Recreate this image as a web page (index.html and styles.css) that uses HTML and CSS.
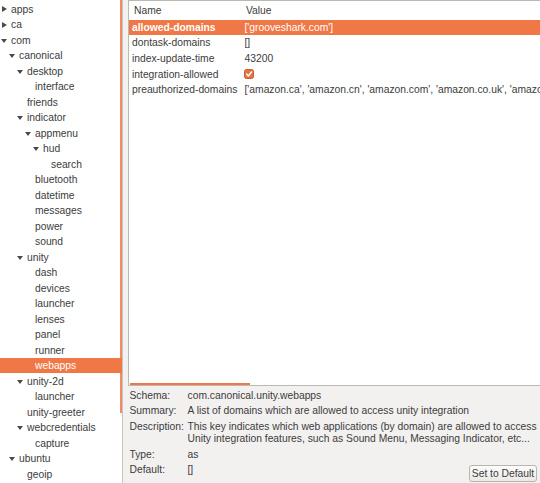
FILE: index.html
```html
<!DOCTYPE html>
<html>
<head>
<meta charset="utf-8">
<link rel="stylesheet" href="styles.css">
</head>
<body>
<div class="window">
  <div class="tree">
    <div class="node lv0"><span class="exp"><svg class="tri-r" width="5" height="6" viewBox="0 0 5 6"><path d="M0 0L5 3L0 6Z"/></svg></span><span>apps</span></div>
    <div class="node lv0"><span class="exp"><svg class="tri-r" width="5" height="6" viewBox="0 0 5 6"><path d="M0 0L5 3L0 6Z"/></svg></span><span>ca</span></div>
    <div class="node lv0"><span class="exp"><svg class="tri-d" width="6" height="4" viewBox="0 0 6 4"><path d="M0 0H6L3 4Z"/></svg></span><span>com</span></div>
    <div class="node lv1"><span class="exp"><svg class="tri-d" width="6" height="4" viewBox="0 0 6 4"><path d="M0 0H6L3 4Z"/></svg></span><span>canonical</span></div>
    <div class="node lv2"><span class="exp"><svg class="tri-d" width="6" height="4" viewBox="0 0 6 4"><path d="M0 0H6L3 4Z"/></svg></span><span>desktop</span></div>
    <div class="node lv3"><span class="exp"></span><span>interface</span></div>
    <div class="node lv2"><span class="exp"></span><span>friends</span></div>
    <div class="node lv2"><span class="exp"><svg class="tri-d" width="6" height="4" viewBox="0 0 6 4"><path d="M0 0H6L3 4Z"/></svg></span><span>indicator</span></div>
    <div class="node lv3"><span class="exp"><svg class="tri-d" width="6" height="4" viewBox="0 0 6 4"><path d="M0 0H6L3 4Z"/></svg></span><span>appmenu</span></div>
    <div class="node lv4"><span class="exp"><svg class="tri-d" width="6" height="4" viewBox="0 0 6 4"><path d="M0 0H6L3 4Z"/></svg></span><span>hud</span></div>
    <div class="node lv5"><span class="exp"></span><span>search</span></div>
    <div class="node lv3"><span class="exp"></span><span>bluetooth</span></div>
    <div class="node lv3"><span class="exp"></span><span>datetime</span></div>
    <div class="node lv3"><span class="exp"></span><span>messages</span></div>
    <div class="node lv3"><span class="exp"></span><span>power</span></div>
    <div class="node lv3"><span class="exp"></span><span>sound</span></div>
    <div class="node lv2"><span class="exp"><svg class="tri-d" width="6" height="4" viewBox="0 0 6 4"><path d="M0 0H6L3 4Z"/></svg></span><span>unity</span></div>
    <div class="node lv3"><span class="exp"></span><span>dash</span></div>
    <div class="node lv3"><span class="exp"></span><span>devices</span></div>
    <div class="node lv3"><span class="exp"></span><span>launcher</span></div>
    <div class="node lv3"><span class="exp"></span><span>lenses</span></div>
    <div class="node lv3"><span class="exp"></span><span>panel</span></div>
    <div class="node lv3"><span class="exp"></span><span>runner</span></div>
    <div class="node lv3 selected"><span class="exp"></span><span>webapps</span></div>
    <div class="node lv2"><span class="exp"><svg class="tri-d" width="6" height="4" viewBox="0 0 6 4"><path d="M0 0H6L3 4Z"/></svg></span><span>unity-2d</span></div>
    <div class="node lv3"><span class="exp"></span><span>launcher</span></div>
    <div class="node lv2"><span class="exp"></span><span>unity-greeter</span></div>
    <div class="node lv2"><span class="exp"><svg class="tri-d" width="6" height="4" viewBox="0 0 6 4"><path d="M0 0H6L3 4Z"/></svg></span><span>webcredentials</span></div>
    <div class="node lv3"><span class="exp"></span><span>capture</span></div>
    <div class="node lv1"><span class="exp"><svg class="tri-d" width="6" height="4" viewBox="0 0 6 4"><path d="M0 0H6L3 4Z"/></svg></span><span>ubuntu</span></div>
    <div class="node lv2"><span class="exp"></span><span>geoip</span></div>
    <div class="vscroll"></div>
  </div>
  <div class="main">
    <div class="table">
      <div class="thead"><div class="c1">Name</div><div class="c2">Value</div></div>
      <div class="row selected"><div class="c1 bold">allowed-domains</div><div class="c2">['grooveshark.com']</div></div>
      <div class="row"><div class="c1">dontask-domains</div><div class="c2">[]</div></div>
      <div class="row"><div class="c1">index-update-time</div><div class="c2">43200</div></div>
      <div class="row"><div class="c1">integration-allowed</div><div class="c2 chk"><svg width="10" height="10" viewBox="0 0 10 10"><rect x="0.5" y="0.5" width="9" height="9" rx="2" fill="#ea7040" stroke="#c85c2e"/><path d="M2.6 5.1L4.3 6.9L7.5 3.1" fill="none" stroke="#fff" stroke-width="1.5" stroke-linecap="round" stroke-linejoin="round"/></svg></div></div>
      <div class="row"><div class="c1">preauthorized-domains</div><div class="c2">['amazon.ca', 'amazon.cn', 'amazon.com', 'amazon.co.uk', 'amazon.de', 'amazon.fr', 'amazon.it']</div></div>
      <div class="hscroll"></div>
    </div>
    <div class="info">
      <div class="lbl">Schema:</div><div class="val">com.canonical.unity.webapps</div>
      <div class="lbl">Summary:</div><div class="val">A list of domains which are allowed to access unity integration</div>
      <div class="lbl">Description:</div><div class="val">This key indicates which web applications (by domain) are allowed to access<br>Unity integration features, such as Sound Menu, Messaging Indicator, etc...</div>
      <div class="lbl">Type:</div><div class="val">as</div>
      <div class="lbl">Default:</div><div class="val short">[]</div><button class="btn">Set to Default</button>
    </div>
  </div>
</div>
</body>
</html>
```

FILE: styles.css
```css
html, body {
  margin: 0;
  padding: 0;
}
body {
  width: 540px;
  height: 483px;
  overflow: hidden;
  background: #f2f1f0;
  font-family: "Liberation Sans", Arial, sans-serif;
  font-size: 10.3px;
  color: #3c3c3c;
}
.window {
  display: flex;
  height: 483px;
}
.tree {
  position: relative;
  flex: none;
  width: 122px;
  height: 483px;
  box-sizing: content-box;
  background: #fff;
  border-right: 1px solid #c9c6c1;
  padding-top: 1.25px;
  overflow: hidden;
}
.node {
  height: 15.5px;
  display: flex;
  align-items: center;
  white-space: nowrap;
}
.exp {
  flex: none;
  width: 10px;
  height: 15.5px;
  display: flex;
  align-items: center;
}
.exp svg { fill: #4a4a4a; }
.tri-r { margin-left: 1px; }
.tri-d { margin-left: 0; margin-top: 1px; }
.lv0 { padding-left: 1px; }
.lv1 { padding-left: 9px; }
.lv2 { padding-left: 17px; }
.lv3 { padding-left: 25px; }
.lv4 { padding-left: 33px; }
.lv5 { padding-left: 41px; }
.node.selected {
  background: #f07746;
  color: #fff;
}
.vscroll {
  position: absolute;
  top: 0;
  right: -1px;
  width: 3px;
  height: 413px;
  background: #f07746;
  opacity: 0.85;
}
.main {
  flex: none;
  width: 412px;
  margin-left: 5px;
  display: flex;
  flex-direction: column;
}
.table {
  position: relative;
  height: 386px;
  box-sizing: border-box;
  border: 1px solid #bcb9b4;
  border-right: none;
  background: #fff;
  overflow: hidden;
}
.thead {
  height: 18.5px;
  display: flex;
  align-items: center;
  white-space: nowrap;
}
.row {
  height: 15.6px;
  display: flex;
  align-items: center;
  white-space: nowrap;
}
.row.selected {
  background: #f07746;
  color: #fff;
}
.c1 {
  flex: none;
  width: 113px;
  box-sizing: border-box;
  padding-left: 3px;
}
.c2 {
  padding-left: 2.5px;
  white-space: nowrap;
}
.thead .c2 { padding-left: 4px; }
.thead .c1 { padding-left: 5px; }
.bold { font-weight: bold; }
.chk {
  display: flex;
  align-items: center;
  padding-left: 2px;
}
.hscroll {
  position: absolute;
  left: 1px;
  bottom: 0;
  width: 120px;
  height: 2px;
  background: #f07746;
}
.info {
  flex: 1;
  display: grid;
  grid-template-columns: 58px 1fr auto;
  row-gap: 3px;
  align-content: start;
  padding: 3.75px 3px 0 1.5px;
  line-height: 12.5px;
}
.val { grid-column: 2 / 4; white-space: nowrap; }
.val.short { grid-column: 2 / 3; }
.btn {
  grid-column: 3;
  align-self: start;
  width: 68px;
  height: 17px;
  margin: 1px 0 -5.5px 0;
  padding: 0;
  box-sizing: border-box;
  border: 1px solid #b8b4ae;
  border-radius: 3px;
  background: linear-gradient(#fcfcfb, #ebe9e6);
  font-family: "Liberation Sans", Arial, sans-serif;
  font-size: 10.3px;
  color: #3c3c3c;
  line-height: 15px;
  text-align: center;
}
```
